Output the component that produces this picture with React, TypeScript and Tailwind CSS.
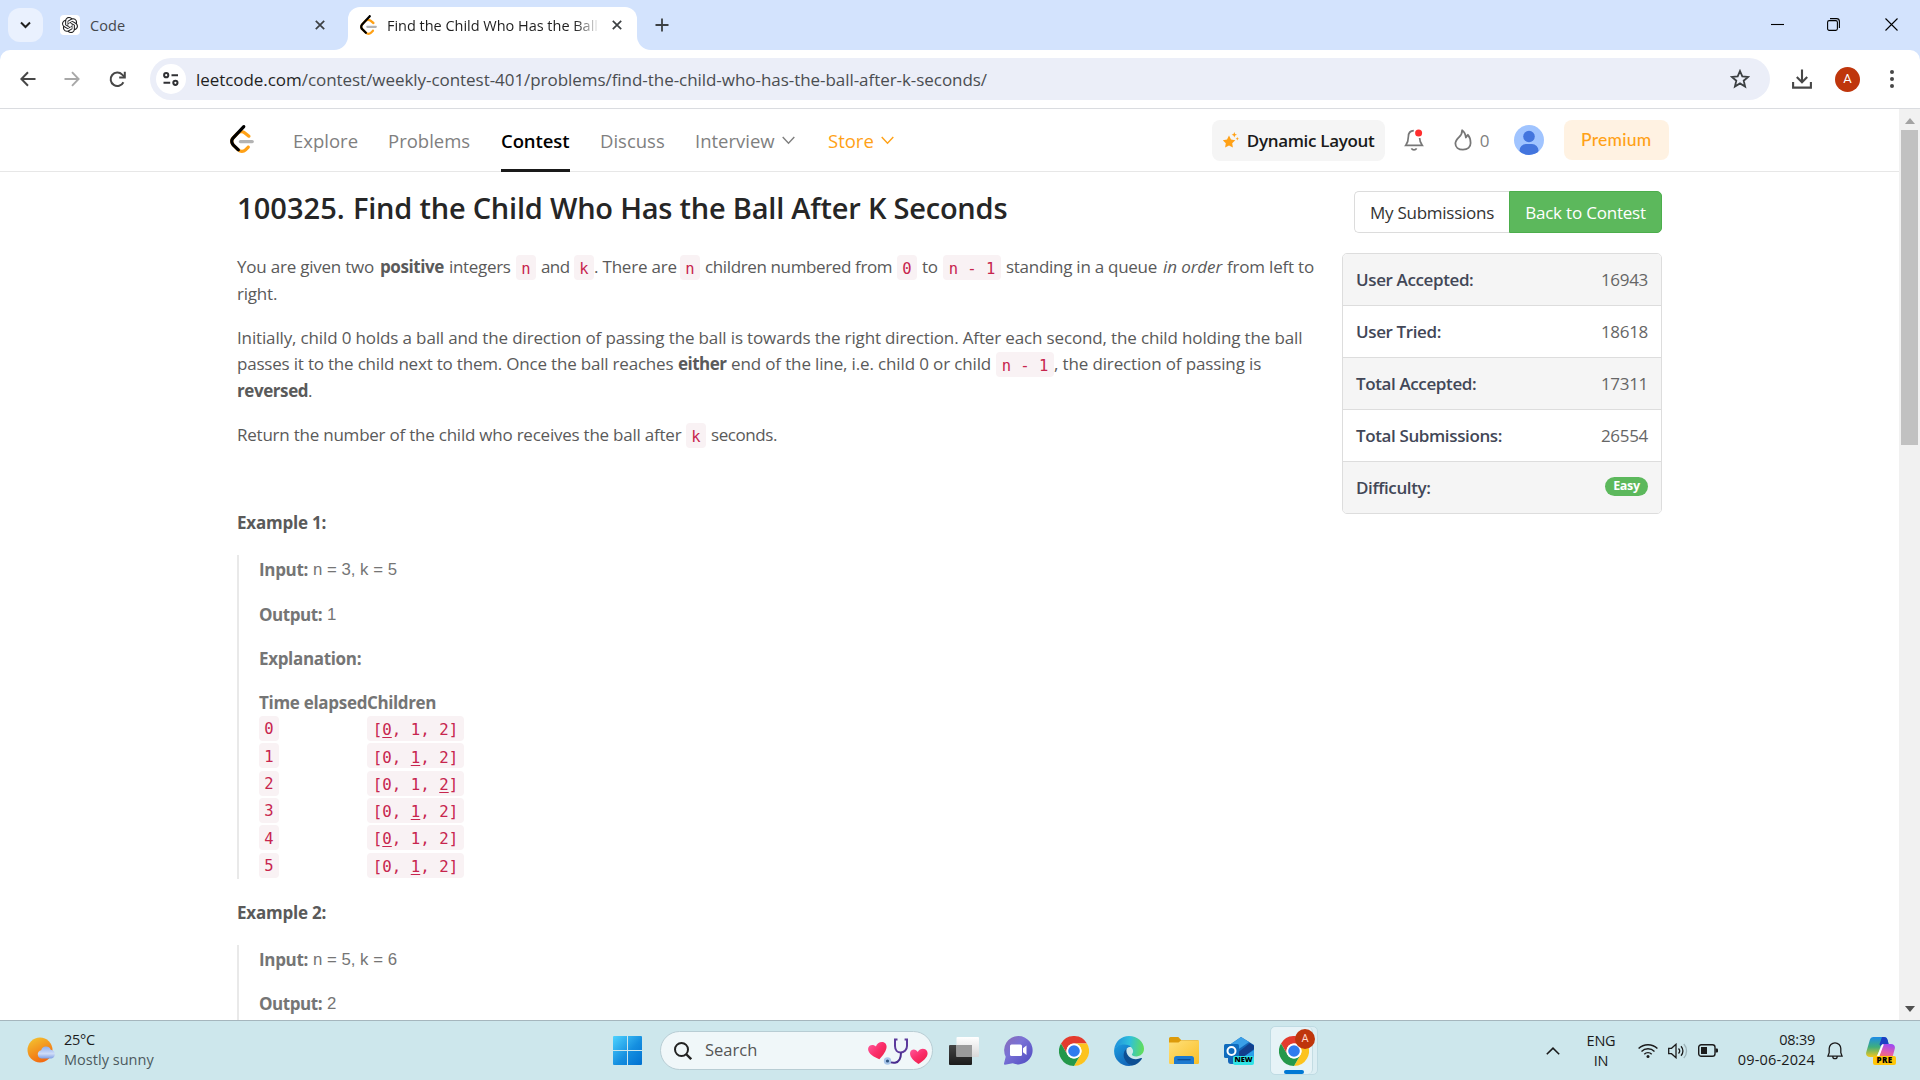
import React from "react";
import { SiOpenai } from "react-icons/si";

/* ---------- shared glyphs ---------- */

function LeetLogo({ className }: { className: string }) {
  return (
    <svg viewBox="0 0 95 111" className={className} fill="none">
      <path
        fill="#ffa116"
        d="M68.0063 83.0664C70.5 80.5764 74.5366 80.5829 77.0223 83.0809C79.508 85.579 79.5015 89.6226 77.0078 92.1127L65.9346 103.17C55.7187 113.371 39.06 113.519 28.6718 103.513C28.6117 103.455 23.9861 98.9201 8.72653 83.957C-1.42528 74.0029 -2.43665 58.0749 7.11648 47.8464L24.9282 28.7745C34.4095 18.6219 51.887 17.5122 62.7275 26.2789L78.9048 39.362C81.6444 41.5776 82.0723 45.5985 79.8606 48.3429C77.6488 51.0873 73.635 51.5159 70.8954 49.3003L54.7182 36.2173C49.0488 31.6325 39.1314 32.2622 34.2394 37.5006L16.4274 56.5727C11.7767 61.5522 12.2861 69.574 17.6456 74.8292C28.851 85.8169 37.4869 94.2846 37.4969 94.2942C42.8977 99.496 51.6304 99.4184 56.9331 94.1234L68.0063 83.0664Z"
      />
      <path
        fill="#b3b3b3"
        d="M41.1067 72.0014C37.5858 72.0014 34.7314 69.1421 34.7314 65.615C34.7314 62.0879 37.5858 59.2286 41.1067 59.2286H88.1245C91.6454 59.2286 94.4997 62.0879 94.4997 65.615C94.4997 69.1421 91.6454 72.0014 88.1245 72.0014H41.1067Z"
      />
      <path
        fill="#000"
        d="M49.9118 2.02335C52.3173 -0.55232 56.3517 -0.686894 58.9228 1.72277C61.494 4.13244 61.6284 8.17385 59.2229 10.7495L16.4276 56.5729C11.7768 61.552 12.2861 69.5738 17.6453 74.8292L37.4088 94.2091C39.9249 96.6764 39.968 100.72 37.505 103.24C35.042 105.761 31.0056 105.804 28.4895 103.337L8.72593 83.9567C-1.42529 74.0021 -2.43665 58.0741 7.1169 47.8463L49.9118 2.02335Z"
      />
    </svg>
  );
}

function CloseIcon() {
  return (
    <svg viewBox="0 0 10 10" className="size-[10px] shrink-0" stroke="#3c4043" strokeWidth="1.7" fill="none">
      <path d="M.8.8l8.4 8.4M9.2.8L.8 9.2" />
    </svg>
  );
}

function ChromeIcon({ className }: { className: string }) {
  return (
    <svg viewBox="0 0 48 48" className={className}>
      <circle cx="24" cy="24" r="23.5" fill="#fff" />
      <path d="M3.2 12A24 24 0 0 1 44.8 12H24a12 12 0 0 0-10.4 18z" fill="#e33b2e" />
      <path d="M44.8 12A24 24 0 0 1 24 48l10.4-18A12 12 0 0 0 24 12z" fill="#fcc31e" />
      <path d="M24 48A24 24 0 0 1 3.2 12l10.4 18a12 12 0 0 0 20.8 0z" fill="#24984a" />
      <circle cx="24" cy="24" r="12" fill="#fff" />
      <circle cx="24" cy="24" r="9.3" fill="#2f7bee" />
    </svg>
  );
}

/* ---------- browser chrome ---------- */

function TabStrip() {
  return (
    <div className="flex h-[50px] items-start bg-[#d3e3fd] pl-2 text-[14.5px] text-[#44474c]">
      <div className="mt-2 flex h-[34px] w-[35px] items-center justify-center rounded-xl bg-[#eaf1fe]">
        <svg viewBox="0 0 11 8" className="h-2 w-[11px]" fill="none" stroke="#1f1f1f" strokeWidth="2">
          <path d="M1 1.5l4.5 4.5L10 1.5" />
        </svg>
      </div>
      <div className="mt-2 ml-[17px] flex h-[34px] w-[265px] items-center">
        <span className="flex size-5 items-center justify-center rounded bg-white">
          <SiOpenai className="size-4 text-[#202020]" />
        </span>
        <span className="ml-[10px] pt-px tracking-[0.05px]">Code</span>
        <span className="ml-auto">
          <CloseIcon />
        </span>
      </div>
      <div className="mt-[36px] ml-[9px] h-[14px] w-[14px] bg-white">
        <div className="size-full rounded-br-[14px] bg-[#d3e3fd]" />
      </div>
      <div className="mt-[7px] flex h-[43px] w-[289px] items-center rounded-t-[12px] bg-white pb-[7px] pl-3">
        <LeetLogo className="h-5 w-[17px]" />
        <span className="ml-[10px] w-[213px] pt-px tracking-[-0.02px] whitespace-nowrap text-[#1f1f1f] [mask-image:linear-gradient(to_right,black_88%,transparent_100%)]">
          Find the Child Who Has the Ball
        </span>
        <span className="ml-[12px]">
          <CloseIcon />
        </span>
      </div>
      <div className="mt-[36px] h-[14px] w-[14px] bg-white">
        <div className="size-full rounded-bl-[14px] bg-[#d3e3fd]" />
      </div>
      <svg viewBox="0 0 14 14" className="mt-[18px] ml-[4px] size-[14px]" stroke="#3c4043" strokeWidth="1.8">
        <path d="M7 .5v13M.5 7h13" />
      </svg>
      <div className="mt-[18px] mr-[22px] ml-auto flex h-[13px] items-center">
        <svg viewBox="0 0 13 13" className="size-[13px]" stroke="#000" strokeWidth="1.1">
          <path d="M0 6.5h13" />
        </svg>
        <svg viewBox="0 0 13 13" className="ml-[43px] size-[13px]" fill="none" stroke="#000" strokeWidth="1.1">
          <rect x=".6" y="2.6" width="9.8" height="9.8" rx="1.6" />
          <path d="M3 .6h6.6a2.8 2.8 0 0 1 2.8 2.8V10" />
        </svg>
        <svg viewBox="0 0 13 13" className="ml-[45px] size-[13px]" stroke="#000" strokeWidth="1.1">
          <path d="M.5.5l12 12M12.5.5l-12 12" />
        </svg>
      </div>
    </div>
  );
}

function Toolbar() {
  return (
    <div className="h-[59px] bg-[#d3e3fd]">
      <div className="flex h-full items-center rounded-t-[10px] border-b border-[#dadce0] bg-white pl-5">
        <svg viewBox="0 0 16 16" className="size-4" fill="none" stroke="#474747" strokeWidth="2">
          <path d="M15.5 8H1.8M8 1.2L1.4 8 8 14.8" />
        </svg>
        <svg viewBox="0 0 16 16" className="ml-[28px] size-4" fill="none" stroke="#a8a8a8" strokeWidth="1.9">
          <path d="M.5 8h13.7M8 1.2L14.6 8 8 14.8" />
        </svg>
        <svg viewBox="0 0 17 17" className="ml-[29px] size-[17px]" fill="none" stroke="#474747" strokeWidth="2">
          <path d="M14.4 11.2A6.7 6.7 0 1 1 13.2 3.6L15.6 6" />
          <path d="M15.8.8v5.6h-5.6" />
        </svg>
        <div className="ml-6 flex h-[42px] w-[1620px] items-center rounded-full bg-[#ebeef8] pr-[20px] pl-[6px]">
          <span className="flex size-[30px] items-center justify-center rounded-full bg-white">
            <svg viewBox="0 0 16 14" className="h-[14px] w-4" fill="none" stroke="#303134" strokeWidth="2">
              <circle cx="3.2" cy="3.2" r="2.1" />
              <path d="M8.5 3.2H15M.5 10.8h6.7" />
              <circle cx="12.4" cy="10.8" r="2.1" />
            </svg>
          </span>
          <span className="ml-[10px] pt-px text-[17px] tracking-[-0.05px] whitespace-nowrap text-[#4a4d51]">
            <span className="text-[#1f1f1f]">leetcode.com</span>
            /contest/weekly-contest-401/problems/find-the-child-who-has-the-ball-after-k-seconds/
          </span>
          <svg viewBox="0 0 20 20" className="ml-auto size-5" fill="none" stroke="#3c4043" strokeWidth="1.8">
            <path d="M10 2l2.3 5.4 5.9.5-4.5 3.8 1.4 5.8L10 14.4l-5.1 3.1 1.4-5.8L1.8 7.900l5.900-.5z" />
          </svg>
        </div>
        <svg viewBox="0 0 20 20" className="ml-[22px] size-5" fill="none" stroke="#474747" strokeWidth="2.1">
          <path d="M10 .5v12M4.800 8L10 13.200 15.200 8M1.100 13v5.600h17.800V13" />
        </svg>
        <span className="ml-[23px] flex size-[25px] items-center justify-center rounded-full bg-[#bf360c] font-['Roboto'] text-[13px] text-white">
          A
        </span>
        <svg viewBox="0 0 4 18" className="ml-[30px] h-[18px] w-1" fill="#474747">
          <circle cx="2" cy="2" r="2" />
          <circle cx="2" cy="9" r="2" />
          <circle cx="2" cy="16" r="2" />
        </svg>
      </div>
    </div>
  );
}

function Scrollbar() {
  return (
    <div className="flex w-[21px] flex-col items-center bg-[#f1f1f1]">
      <svg viewBox="0 0 10 6" className="mt-[9px] h-[6px] w-[10px]" fill="#a3a3a3">
        <path d="M0 6l5-6 5 6z" />
      </svg>
      <div className="mt-[6px] h-[315px] w-[17px] bg-[#c1c1c1]" />
      <svg viewBox="0 0 10 6" className="mt-auto mb-[8px] h-[6px] w-[10px]" fill="#505050">
        <path d="M0 0l5 6 5-6z" />
      </svg>
    </div>
  );
}

/* ---------- site navigation ---------- */

function Chevron() {
  return (
    <svg viewBox="0 0 13 9" className="h-[9px] w-[13px]" fill="none" stroke="currentColor" strokeWidth="1.4">
      <path d="M.7 1l5.8 6.3L12.3 1" />
    </svg>
  );
}

function SiteNav() {
  return (
    <div className="flex h-[63px] items-center border-b border-[#e7e7e7] pl-[230px] text-[18.5px] whitespace-nowrap text-[#7f7f7f]">
      <LeetLogo className="-mt-[3px] h-7 w-6" />
      <span className="ml-[39px] w-[95px] pt-[2px]">Explore</span>
      <span className="w-[113px] pt-[2px]">Problems</span>
      <div className="flex h-[63px] w-[69px] flex-col self-start">
        <span className="flex h-[60px] items-center pt-[3px] font-semibold tracking-[-0.1px] text-black">Contest</span>
        <span className="h-[3px] bg-[#1a1a1a]" />
      </div>
      <span className="ml-[30px] w-[95px] pt-[2px]">Discuss</span>
      <span className="flex w-[133px] items-center gap-[7px]">
        <span className="pt-[2px]">Interview</span>
        <Chevron />
      </span>
      <span className="flex items-center gap-[7px] text-[#ffa116]">
        <span className="pt-[2px]">Store</span>
        <Chevron />
      </span>
      <div className="ml-[318px] flex h-[41px] w-[173px] items-center rounded-lg bg-[#f5f5f5] pl-[11px]">
        <svg viewBox="0 0 16 16" className="size-4" fill="#ffa116">
          <path d="M6 3.600l2 4 4.300.6-3.100 3 .7 4.300L6 13.500l-3.900 2 .7-4.300-3.100-3 4.300-.6z" />
          <path d="M11.300 0l.8 1.900 1.900.8-1.900.8-.8 1.900-.8-1.900-1.900-.8 1.900-.8z" />
          <path d="M14.300 5l.5 1.200 1.200.5-1.200.5-.5 1.200-.5-1.200-1.200-.5 1.200-.5z" />
        </svg>
        <span className="ml-[8px] pt-px text-[17px] font-semibold tracking-[-0.33px] text-[#1a1a1a]">Dynamic Layout</span>
      </div>
      <svg viewBox="0 0 20 22" className="ml-[19px] h-[22px] w-5" fill="none" stroke="#777" strokeWidth="1.7">
        <path d="M9.800 1.600C6.300 1.800 4.400 4.300 4.400 7.500c0 4.700-.8 6.300-2.700 8.900h16.600c-1.900-2.600-2.700-4.200-2.700-7.400" />
        <path d="M7.400 19.300c.6 1.100 1.500 1.500 2.600 1.500s2-.4 2.600-1.500" />
        <circle cx="14.600" cy="4" r="3.500" fill="#ff2d2d" stroke="none" />
      </svg>
      <svg viewBox="0 0 18 22" className="ml-[30px] h-[22px] w-[18px]" fill="none" stroke="#777" strokeWidth="1.8" strokeLinejoin="round">
        <path d="M8.100 1.300c.3 3.500-1.300 5-3.300 7.100C2.800 10.500 1.400 12 1.400 14.400c0 3.700 3 6.300 7.600 6.300s7.600-2.600 7.600-6.600c0-3.300-1.100-6.600-2.700-8.300l-2 2.800C11.500 5.300 10.200 2.700 8.100 1.300z" />
      </svg>
      <span className="ml-[8px] w-[10px] pt-[2px] text-[17px]">0</span>
      <svg viewBox="0 0 30 30" className="ml-[24px] size-[30px]">
        <clipPath id="avatar">
          <circle cx="15" cy="15" r="15" />
        </clipPath>
        <g clipPath="url(#avatar)">
          <rect width="30" height="30" fill="#a0c4ff" />
          <circle cx="15" cy="11.500" r="5.800" fill="#4375de" />
          <path d="M5.500 30v-4.500a6.500 6.500 0 0 1 6.500-6.500h6a6.500 6.500 0 0 1 6.500 6.500V30z" fill="#4375de" />
        </g>
      </svg>
      <div className="ml-[20px] flex h-10 w-[105px] items-center justify-center rounded-lg bg-[#fff2e2] font-['Lato'] text-[17.5px] font-medium tracking-[0.25px] text-[#ffa116]">
        Premium
      </div>
    </div>
  );
}

/* ---------- problem statement ---------- */

function Code({ children, wide }: { children: React.ReactNode; wide?: boolean }) {
  return (
    <code
      className={
        wide
          ? "flex h-[25px] w-[58px] shrink-0 items-center justify-center rounded bg-[#f9f2f4] pt-[3px] font-['DejaVu_Sans_Mono'] text-[15.5px] tracking-normal whitespace-pre text-[#c7254e]"
          : "flex h-[25px] w-5 shrink-0 items-center justify-center rounded bg-[#f9f2f4] pt-[3px] font-['DejaVu_Sans_Mono'] text-[15.5px] tracking-normal text-[#c7254e]"
      }
    >
      {children}
    </code>
  );
}

function Line({ children }: { children: React.ReactNode }) {
  return <div className="flex h-[26.67px] items-center leading-[26.67px] whitespace-pre">{children}</div>;
}

const steps = [0, 1, 2, 1, 0, 1];

function StateCode({ ball }: { ball: number }) {
  return (
    <code className="flex h-[25px] w-[97px] items-center justify-center rounded bg-[#f9f2f4] pt-[3px] font-['DejaVu_Sans_Mono'] text-[15.75px] whitespace-pre text-[#c7254e]">
      [{[0, 1, 2].map((n) => (
        <React.Fragment key={n}>
          {n > 0 && ", "}
          <span className={n === ball ? "underline decoration-1 underline-offset-2" : ""}>{n}</span>
        </React.Fragment>
      ))}]
    </code>
  );
}

function Example({ input, output, children }: { input: string; output: string; children?: React.ReactNode }) {
  return (
    <div className="mt-[18.5px] border-l-2 border-[#e9e9e9] pt-[2px] pl-5 text-[#757575]">
      <Line>
        <b className="w-[54px] tracking-[-0.33px]">Input:</b>
        <span className="font-['Liberation_Sans'] text-[16.8px] tracking-normal">{input}</span>
      </Line>
      <div className="h-[18px]" />
      <Line>
        <b className="w-[68px] tracking-[-0.45px]">Output:</b>
        <span className="font-['Liberation_Sans'] text-[16.8px] tracking-normal">{output}</span>
      </Line>
      {children}
    </div>
  );
}

function Statement() {
  return (
    <div className="w-[1105px] text-[17px] tracking-[-0.2px] text-[#5a5a5a]">
      <h1 className="flex h-[72px] pt-[13px] text-[29px] leading-[46px] font-semibold whitespace-nowrap text-[#262626]">
        <span className="w-[116px] tracking-[0.05px]">100325.</span>
        <span className="tracking-[-0.22px]">Find the Child Who Has the Ball After K Seconds</span>
      </h1>
      <div className="pt-[10px]">
        <Line>
          <span className="w-[143px] tracking-[-0.22px]">You are given two</span>
          <b className="w-[69px] tracking-[-0.4px]">positive</b>
          <span className="w-[67px] tracking-[-0.32px]">integers</span>
          <Code>n</Code>
          <span className="ml-[5px] w-[33px] tracking-[-0.6px]">and</span>
          <Code>k</Code>
          <span className="w-[86px] tracking-[-0.2px]">. There are</span>
          <Code>n</Code>
          <span className="ml-[5px] w-[192px] tracking-[-0.37px]">children numbered from</span>
          <Code>0</Code>
          <span className="ml-[5px] w-[21px]">to</span>
          <Code wide>n - 1</Code>
          <span className="ml-[5px] w-[157px] tracking-[-0.27px]">standing in a queue</span>
          <i className="w-[64px] tracking-[-0.1px]">in order</i>
          <span className="tracking-[-0.2px]">from left to</span>
        </Line>
        <Line>right.</Line>
      </div>
      <div className="pt-[17.5px]">
        <Line>
          <span className="tracking-[-0.144px]">
            Initially, child 0 holds a ball and the direction of passing the ball is towards the right direction. After
            each second, the child holding the ball
          </span>
        </Line>
        <Line>
          <span className="w-[441px] tracking-[-0.2px]">passes it to the child next to them. Once the ball reaches</span>
          <b className="w-[53px] tracking-[-0.5px]">either</b>
          <span className="w-[265px] tracking-[-0.14px]">end of the line, i.e. child 0 or child</span>
          <Code wide>n - 1</Code>
          <span className="tracking-[-0.14px]">, the direction of passing is</span>
        </Line>
        <Line>
          <b className="tracking-[-0.42px]">reversed</b>.
        </Line>
      </div>
      <div className="pt-[17.5px]">
        <Line>
          <span className="w-[449px] tracking-[-0.23px]">Return the number of the child who receives the ball after</span>
          <Code>k</Code>
          <span className="ml-[5px] tracking-[-0.42px]">seconds.</span>
        </Line>
      </div>
      <div className="pt-[61px]">
        <Line>
          <b className="tracking-[-0.22px]">Example 1:</b>
        </Line>
      </div>
      <Example input="n = 3, k = 5" output="1">
        <div className="h-[18px]" />
        <Line>
          <b className="tracking-[-0.33px]">Explanation:</b>
        </Line>
        <div className="mt-[17px] h-[26px]">
          <Line>
            <b className="w-[108px] tracking-[-0.3px]">Time elapsed</b>
            <b className="tracking-[-0.38px]">Children</b>
          </Line>
        </div>
        <div className="flex h-[162.5px] flex-col justify-between pb-px">
          {steps.map((ball, t) => (
            <div key={t} className="flex h-[25px] w-full items-center tracking-normal">
              <span className="w-[108px]">
                <Code>{t}</Code>
              </span>
              <StateCode ball={ball} />
            </div>
          ))}
        </div>
      </Example>
      <div className="pt-[21px]">
        <Line>
          <b className="tracking-[-0.22px]">Example 2:</b>
        </Line>
      </div>
      <Example input="n = 5, k = 6" output="2">
        <div className="h-[18px]" />
      </Example>
    </div>
  );
}

function StatRow({ label, shaded, children }: { label: string; shaded?: boolean; children: React.ReactNode }) {
  return (
    <div
      className={
        shaded
          ? "flex h-[52px] items-center justify-between border-t border-[#dddddd] bg-[#f5f5f5] px-[13px] first:h-[51px] first:border-t-0"
          : "flex h-[52px] items-center justify-between border-t border-[#dddddd] bg-white px-[13px]"
      }
    >
      <span className="font-semibold tracking-[-0.38px] text-[#424757]">{label}</span>
      <span className="text-[#666]">{children}</span>
    </div>
  );
}

function Sidebar() {
  return (
    <div className="flex w-[320px] flex-col pt-[19px] text-[17px]">
      <div className="flex h-[42px] w-[308px] self-end whitespace-nowrap">
        <div className="flex w-[155px] items-center justify-center rounded-l-[5px] border border-r-0 border-[#dcdcdc] bg-white pt-px tracking-[-0.26px] text-[#333]">
          My Submissions
        </div>
        <div className="flex w-[153px] items-center justify-center rounded-r-[5px] border border-[#4cae4c] bg-[#5cb85c] pt-px tracking-[-0.2px] text-white">
          Back to Contest
        </div>
      </div>
      <div className="mt-5 overflow-hidden rounded-[5px] border border-[#dddddd]">
        <StatRow label="User Accepted:" shaded>
          <span className="tracking-[-0.3px]">16943</span>
        </StatRow>
        <StatRow label="User Tried:">
          <span className="tracking-[-0.3px]">18618</span>
        </StatRow>
        <StatRow label="Total Accepted:" shaded>
          <span className="tracking-[-0.3px]">17311</span>
        </StatRow>
        <StatRow label="Total Submissions:">
          <span className="tracking-[-0.3px]">26554</span>
        </StatRow>
        <StatRow label="Difficulty:" shaded>
          <span className="-mt-[2px] flex h-[19px] w-[43px] items-center justify-center rounded-full bg-[#5cb85c] text-[12.5px] font-bold tracking-[-0.3px] text-white">
            Easy
          </span>
        </StatRow>
      </div>
    </div>
  );
}

/* ---------- taskbar ---------- */

function WeatherIcon() {
  return (
    <svg viewBox="0 0 30 28" className="h-7 w-[30px]">
      <defs>
        <linearGradient id="sun" x1=".2" y1="0" x2=".7" y2="1">
          <stop offset="0" stopColor="#f3c12f" />
          <stop offset="1" stopColor="#f3640e" />
        </linearGradient>
        <linearGradient id="cloud" x1="0" y1="0" x2="0" y2="1">
          <stop offset="0" stopColor="#8fb0f0" />
          <stop offset=".6" stopColor="#cfdcf7" />
          <stop offset="1" stopColor="#7f9fe4" />
        </linearGradient>
      </defs>
      <circle cx="13" cy="13" r="12.500" fill="url(#sun)" />
      <path d="M14.500 21.500a4.200 4.200 0 0 1-.3-8.300 5 5 0 0 1 9.500-.4 4.400 4.400 0 0 1 .5 8.700z" fill="url(#cloud)" />
    </svg>
  );
}

function WindowsIcon() {
  return (
    <svg viewBox="0 0 29 29" className="size-[29px]">
      <defs>
        <linearGradient id="win" gradientUnits="userSpaceOnUse" x1="0" y1="0" x2="29" y2="29">
          <stop offset="0" stopColor="#4fd3ff" />
          <stop offset=".55" stopColor="#158fe0" />
          <stop offset="1" stopColor="#0070d0" />
        </linearGradient>
      </defs>
      <path d="M1 0h13v14H0V1a1 1 0 0 1 1-1zM15 0h13a1 1 0 0 1 1 1v13H15zM0 15h14v14H1a1 1 0 0 1-1-1zM15 15h14v13a1 1 0 0 1-1 1H15z" fill="url(#win)" />
    </svg>
  );
}

function SearchArt() {
  return (
    <svg viewBox="0 0 60 28" className="h-7 w-[60px]" fill="none">
      <defs>
        <linearGradient id="heart" x1="0" y1="0" x2="1" y2="1">
          <stop offset="0" stopColor="#ff5fa0" />
          <stop offset=".5" stopColor="#fb2d6a" />
          <stop offset="1" stopColor="#e8203f" />
        </linearGradient>
      </defs>
      <path
        d="M10.500 22.500C5 19.800 0 16 .3 11.200.6 7.300 5.800 6 8.400 9.400c1.300-4 7.200-5.400 9.600-2.200 3.300 4.500-2.200 10.800-7.500 15.300z"
        transform="rotate(-6 9 14)"
        fill="url(#heart)"
      />
      <path
        d="M51.500 27c-4.900-2.600-9.800-5.800-9.600-10.400.2-3.900 5.200-4.900 7.500-1.500 1.500-3.900 6.700-5 9-2 3.100 4.300-1.900 9.900-6.900 13.900z"
        transform="rotate(7 51 18)"
        fill="url(#heart)"
      />
      <path d="M29.500 2.500H27v6.500c0 4 2.600 6.500 5.700 6.500s6.300-2.500 6.300-6.500V2.500h-2.400" stroke="#5c3b9c" strokeWidth="2" />
      <path d="M33 15.500c0 6-1.200 9.500-6 10.200-3 .4-4.600-.1-6.500-1.700" stroke="#4a2d8f" strokeWidth="2" />
      <circle cx="19.500" cy="24" r="3.700" fill="#a9c6ea" />
      <circle cx="19.500" cy="24" r="1.600" fill="#2f5583" />
    </svg>
  );
}

function TaskViewIcon() {
  return (
    <svg viewBox="0 0 30 28" className="h-7 w-[30px]">
      <defs>
        <linearGradient id="tvb" x1="0" y1="0" x2="0" y2="1">
          <stop offset="0" stopColor="#444" />
          <stop offset="1" stopColor="#1c1c1c" />
        </linearGradient>
        <linearGradient id="tvf" x1="0" y1="0" x2="0" y2="1">
          <stop offset="0" stopColor="#fff" />
          <stop offset="1" stopColor="#d9d9d9" />
        </linearGradient>
      </defs>
      <rect x="0" y="8" width="23" height="20" rx="1" fill="url(#tvb)" />
      <rect x="7.500" y="0" width="22.500" height="20" rx="1" fill="url(#tvf)" />
      <rect x="7.500" y="8" width="15.500" height="12" fill="#9b9b9b" />
    </svg>
  );
}

function TeamsIcon() {
  return (
    <svg viewBox="0 0 29 29" className="size-[29px]">
      <defs>
        <linearGradient id="tm" x1="0" y1="0" x2="1" y2="1">
          <stop offset="0" stopColor="#8a6cb5" />
          <stop offset=".4" stopColor="#7a72d6" />
          <stop offset="1" stopColor="#4d49c0" />
        </linearGradient>
      </defs>
      <path d="M14.500 0a14.200 14.200 0 1 1-5.800 27.200L1 28.700c-.8.100-1.300-.5-1-1.300l1.700-6.600A14.300 14.300 0 0 1 14.500 0z" fill="url(#tm)" />
      <rect x="6" y="8.500" width="12" height="11.500" rx="1.500" fill="#fff" />
      <path d="M19 12.200l3.500-2.700v9.500L19 16.300z" fill="#fff" />
    </svg>
  );
}

function EdgeIcon() {
  return (
    <svg viewBox="0 0 30 30" className="size-[30px]">
      <defs>
        <linearGradient id="eg1" x1="0" y1=".4" x2="1" y2=".5">
          <stop offset="0" stopColor="#1f8fdc" />
          <stop offset=".5" stopColor="#2fc0dc" />
          <stop offset="1" stopColor="#62de58" />
        </linearGradient>
        <linearGradient id="eg2" x1="0" y1="0" x2=".6" y2="1">
          <stop offset="0" stopColor="#1b9de0" />
          <stop offset="1" stopColor="#1266b8" />
        </linearGradient>
      </defs>
      <path d="M.2 13.600C1 5.700 7.300 0 15 0c8.300 0 15 6 15 12.800 0 4.600-3.600 7.600-7.700 7.600-3.200 0-4.500-1-4.500-1.800 0-.7 1.300-1.200 1.300-3.400 0-3.200-3.300-6-7.600-6C6 9.200 1.600 11 .2 13.600z" fill="url(#eg1)" />
      <path d="M.2 13.600C1.600 10.900 5.600 8.600 10.300 8.600c2.700 0 5.100.8 6.800 2.200-3.600-.2-6.300 3.300-6.300 7.200 0 5.700 4.200 9.800 7.600 11.600-1 .3-2.200.4-3.400.4C6 30-.8 22.300.2 13.600z" fill="url(#eg2)" />
      <path d="M12.600 12.700c-3 2.400-3.700 6.700-2 10.400 1.600 3.500 4.700 6 7.800 6.500 3.900-.8 7.300-3.300 9.400-6.700.4-.7-.2-1-.7-.8-4.400 2-9.500 1.300-12.400-1.800-2-2.200-2.700-5-2.100-7.600z" fill="#0d4f93" />
    </svg>
  );
}

function FolderIcon() {
  return (
    <svg viewBox="0 0 30 27" className="h-[27px] w-[30px]">
      <defs>
        <linearGradient id="fd" x1="0" y1="0" x2="1" y2="1">
          <stop offset="0" stopColor="#ffe07a" />
          <stop offset="1" stopColor="#f9bf27" />
        </linearGradient>
      </defs>
      <path d="M0 1.500A1.500 1.500 0 0 1 1.500 0h7.800l3 3.200H28.500A1.500 1.500 0 0 1 30 4.700V12H0z" fill="#dd9b0b" />
      <path d="M0 5.500h9.500l2.500-2H30v22.200a1.300 1.300 0 0 1-1.300 1.300H1.300A1.300 1.300 0 0 1 0 25.700z" fill="url(#fd)" />
      <path d="M5 27v-5.500A2.500 2.500 0 0 1 7.500 19h15a2.500 2.500 0 0 1 2.500 2.500V27z" fill="#1c79cf" />
      <path d="M8.500 22.700h13" stroke="#0c4d94" strokeWidth="1.300" />
    </svg>
  );
}

function OutlookIcon() {
  return (
    <div className="relative h-7 w-[30px]">
      <svg viewBox="0 0 30 28" className="h-7 w-[30px]">
        <path d="M4 9L17 0l13 8v16a3 3 0 0 1-3 3H7a3 3 0 0 1-3-3z" fill="#1466b8" />
        <path d="M4 9L17 0l8 5L9 16z" fill="#3aa0e8" />
        <path d="M12 17L26 6l4 3v3l-14 11z" fill="#123f8c" />
        <path d="M16 22l14-9v10a4 4 0 0 1-4 4H16z" fill="#2b9fe8" />
        <rect x="0" y="7" width="15" height="14" rx="1.500" fill="#0f6cbd" />
        <circle cx="7.500" cy="14" r="4" fill="none" stroke="#fff" strokeWidth="2" />
      </svg>
      <span className="absolute right-0 bottom-0 flex h-[9px] w-[21px] items-center justify-center rounded-[2px] bg-[#2fe3e6] text-[7.5px] font-extrabold text-black">
        NEW
      </span>
    </div>
  );
}

function CopilotIcon() {
  return (
    <div className="relative h-7 w-[29px]">
      <svg viewBox="0 0 29 28" className="h-7 w-[29px]">
        <defs>
          <linearGradient id="cp1" x1="0" y1="0" x2="0" y2="1">
            <stop offset="0" stopColor="#1c8be6" />
            <stop offset=".5" stopColor="#3fae7c" />
            <stop offset="1" stopColor="#f2c81e" />
          </linearGradient>
          <linearGradient id="cp2" x1=".6" y1="0" x2=".3" y2="1">
            <stop offset="0" stopColor="#a04af0" />
            <stop offset=".5" stopColor="#e05bb0" />
            <stop offset="1" stopColor="#ff7a4c" />
          </linearGradient>
        </defs>
        <path d="M7.500 0H18c2 0 3 1.200 3.600 3l1 4h-5c-1.600 0-2.400.8-2.900 2.200L12 17c-.6 2-1.600 3-3.500 3H4c-3 0-4.500-2-3.700-5L3.800 3C4.400 1.200 5.500 0 7.500 0z" fill="url(#cp1)" />
        <path d="M16 0h2c2 0 3 1.200 3.600 3l1 4h-5c-1.500 0-2.300.6-2.900 2.200l-1.200-2z" fill="#1b3fc4" />
        <path d="M18 7h7c3 0 4.500 2 3.700 5L26 22H9c3 0 4-1.600 4.700-4l2.500-8.500C16.600 8 17 7 18 7z" fill="url(#cp2)" />
        <path d="M16.300 7.500h1.500L13 20h-2.500z" fill="#fff" />
      </svg>
      <span className="absolute -right-[1px] bottom-0 flex h-[9px] w-[23px] items-center justify-center rounded-[2px] bg-[#ffc60a] text-[8px] font-extrabold tracking-[0.3px] text-black">
        PRE
      </span>
    </div>
  );
}

function Taskbar() {
  return (
    <div className="flex h-[60px] items-center border-t border-[#a5b6bd] bg-[#cde7ec] pl-[27px] text-[14.5px] whitespace-nowrap text-[#1b1b1b]">
      <WeatherIcon />
      <div className="mt-[-2px] ml-[7px] w-[549px] leading-5">
        <div className="tracking-[-0.3px]">25°C</div>
        <div className="tracking-[0.03px] text-[#4c5a5e]">Mostly sunny</div>
      </div>
      <WindowsIcon />
      <div className="ml-[18px] flex h-[39px] w-[273px] items-center rounded-full border border-[#b8cdd4] bg-[#f0f7f9] pl-[13px]">
        <svg viewBox="0 0 18 18" className="size-[18px]" fill="none" stroke="#222" strokeWidth="2">
          <circle cx="7.500" cy="7.500" r="6.500" />
          <path d="M12 12l5.200 5.200" strokeWidth="2.400" />
        </svg>
        <span className="ml-[13px] w-[163px] text-[16.5px] text-[#555]">Search</span>
        <SearchArt />
      </div>
      <div className="ml-4">
        <TaskViewIcon />
      </div>
      <div className="ml-[25px]">
        <TeamsIcon />
      </div>
      <ChromeIcon className="ml-[26px] size-[30px]" />
      <div className="ml-[25px]">
        <EdgeIcon />
      </div>
      <div className="ml-[25px]">
        <FolderIcon />
      </div>
      <div className="ml-[25px]">
        <OutlookIcon />
      </div>
      <div className="ml-[16px] h-[49px] w-[48px] rounded-[5px] border border-[#bfdbe3] bg-[#dceef3]">
        <div className="relative flex h-[47px] w-[42px] items-center justify-center rounded-[5px] border-r border-[#c3dce3] bg-[#e6f3f7]">
          <ChromeIcon className="ml-[5px] size-[30px]" />
          <span className="absolute top-[2px] left-[24px] flex size-5 items-center justify-center rounded-full bg-[#bf360c] font-['Roboto'] text-[11px] text-[#ffd9cc]">
            A
          </span>
          <span className="absolute bottom-0 left-[13px] h-1 w-5 rounded-full bg-[#0078d4]" />
        </div>
      </div>
      <svg viewBox="0 0 14 8" className="ml-[228px] h-2 w-[14px]" fill="none" stroke="#1b1b1b" strokeWidth="1.600">
        <path d="M.8 7.200L7 1.200l6.200 6" />
      </svg>
      <div className="ml-[22px] w-[38px] text-center leading-5 tracking-[-0.2px]">
        <div>ENG</div>
        <div>IN</div>
      </div>
      <svg viewBox="0 0 20 15" className="ml-[18px] h-[15px] w-5" fill="none" stroke="#1b1b1b" strokeWidth="1.400">
        <path d="M.6 5.600a13.300 13.300 0 0 1 18.800 0M3.500 8.500a9.200 9.200 0 0 1 13 0M6.300 11.200a5.200 5.200 0 0 1 7.400 0" />
        <circle cx="10" cy="13.400" r="1.500" fill="#1b1b1b" stroke="none" />
      </svg>
      <svg viewBox="0 0 20 16" className="ml-[10px] h-4 w-5" fill="none" stroke="#1b1b1b" strokeWidth="1.300">
        <path d="M.7 5.300h2.800L8 1.300v13.400l-4.500-4H.7zM10.500 5.500a3.600 3.600 0 0 1 0 5M13 3.200a7 7 0 0 1 0 9.600" />
        <path d="M15.800 1a10.300 10.300 0 0 1 0 14" stroke="#9db3b8" />
      </svg>
      <svg viewBox="0 0 20 13" className="ml-[10px] h-[13px] w-5" fill="none" stroke="#1b1b1b" strokeWidth="1.400">
        <rect x=".7" y=".7" width="16.300" height="11.600" rx="2.600" />
        <rect x="3" y="3" width="6" height="7" fill="#1b1b1b" stroke="none" />
        <path d="M17.500 4.500H19a1 1 0 0 1 1 1v2a1 1 0 0 1-1 1h-1.500z" fill="#1b1b1b" stroke="none" />
      </svg>
      <div className="mt-[-2px] ml-[17px] w-[80px] text-right leading-5">
        <div className="tracking-[-0.25px]">08:39</div>
        <div className="tracking-[0.15px]">09-06-2024</div>
      </div>
      <svg viewBox="0 0 16 18" className="ml-[12px] h-[18px] w-4" fill="none" stroke="#1b1b1b" strokeWidth="1.300">
        <path d="M8 .8a5.800 5.800 0 0 0-5.800 5.800v4L.9 14.200h14.200l-1.300-3.600v-4A5.800 5.800 0 0 0 8 .8zM5.800 14.500a2.200 2.200 0 0 0 4.400 0" />
      </svg>
      <div className="ml-[23px]">
        <CopilotIcon />
      </div>
    </div>
  );
}

export default function App() {
  return (
    <div className="flex h-[1080px] w-[1920px] flex-col overflow-hidden bg-white font-['Open_Sans','Noto_Sans',sans-serif]">
      <TabStrip />
      <Toolbar />
      <div className="flex h-[911px]">
        <div className="flex h-full w-[1899px] flex-col overflow-hidden">
          <SiteNav />
          <div className="flex min-h-0 flex-1 items-start pl-[237px]">
            <Statement />
            <Sidebar />
          </div>
        </div>
        <Scrollbar />
      </div>
      <Taskbar />
    </div>
  );
}
